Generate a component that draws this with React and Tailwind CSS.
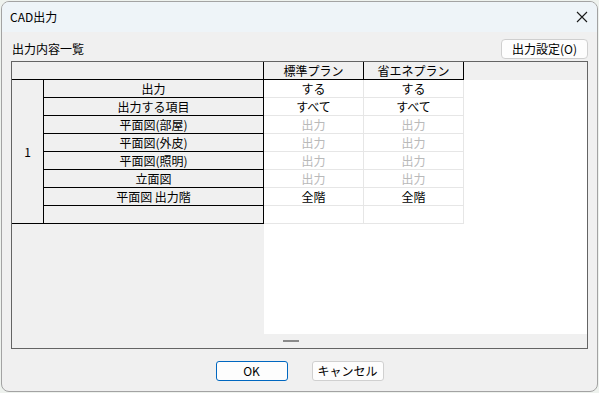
import React from "react";

const font = { fontFamily: '"Noto Sans CJK JP", "Noto Sans", sans-serif' };

const rows = [
  { label: "出力", a: "する", b: "する", dim: false },
  { label: "出力する項目", a: "すべて", b: "すべて", dim: false },
  { label: "平面図(部屋)", a: "出力", b: "出力", dim: true },
  { label: "平面図(外皮)", a: "出力", b: "出力", dim: true },
  { label: "平面図(照明)", a: "出力", b: "出力", dim: true },
  { label: "立面図", a: "出力", b: "出力", dim: true },
  { label: "平面図 出力階", a: "全階", b: "全階", dim: false },
  { label: "", a: "", b: "", dim: false },
];

export default function App() {
  return (
    <div className="w-[599px] h-[393px] bg-[#eef2ee] overflow-hidden text-[12px] text-black" style={font}>
      <div className="ml-[1px] mt-[1px] w-[597px] h-[391px] border border-[#a3a3a3] rounded-[8px] overflow-hidden flex flex-col bg-[#f0f0f0]">
        {/* title bar */}
        <div className="h-[30px] bg-[#eef4f8] flex items-center justify-between pl-[8px] pr-[8px] shrink-0">
          <span className="leading-none">CAD出力</span>
          <svg width="12" height="12" viewBox="0 0 12 12" className="mr-[1px]">
            <path d="M1 1 L11 11 M11 1 L1 11" stroke="#1a1a1a" strokeWidth="1.1" />
          </svg>
        </div>
        {/* body */}
        <div className="flex-1 flex flex-col px-[9px] pt-[7px]">
          <div className="h-[20px] flex items-center justify-between">
            <span className="leading-none ml-[1px]">出力内容一覧</span>
            <button className="h-[20px] w-[87px] bg-[#fdfdfd] border border-[#cfcfcf] rounded-[4px] flex items-center justify-center leading-none">
              出力設定(O)
            </button>
          </div>
          {/* table */}
          <div className="mt-[2px] h-[288px] border border-[#646464] flex flex-col">
            {/* header */}
            <div className="flex h-[18px] shrink-0 bg-[#f0f0f0]">
              <div className="w-[252px] border-r border-b border-black"></div>
              <div className="w-[100px] border-r border-b border-black flex items-center justify-center leading-none">標準プラン</div>
              <div className="w-[100px] border-r border-b border-black flex items-center justify-center leading-none">省エネプラン</div>
              <div className="flex-1"></div>
            </div>
            {/* body */}
            <div className="flex flex-1">
              <div className="w-[252px] bg-[#f0f0f0] flex items-start">
                <div className="w-[32px] h-[144px] border-r border-b border-black flex items-center justify-center leading-none">1</div>
                <div className="w-[220px] flex flex-col">
                  {rows.map((r, i) => (
                    <div key={i} className="h-[18px] border-r border-b border-black flex items-center justify-center leading-none">
                      {r.label}
                    </div>
                  ))}
                </div>
              </div>
              <div className="flex-1 bg-white flex items-start">
                <div className="flex flex-col w-[100px]">
                  {rows.map((r, i) => (
                    <div key={i} className={`h-[18px] border-r border-b border-[#e6e6e6] flex items-center justify-center leading-none ${r.dim ? "text-[#b9b9b9]" : "text-black"}`}>
                      {r.a}
                    </div>
                  ))}
                </div>
                <div className="flex flex-col w-[100px]">
                  {rows.map((r, i) => (
                    <div key={i} className={`h-[18px] border-r border-b border-[#e6e6e6] flex items-center justify-center leading-none ${r.dim ? "text-[#b9b9b9]" : "text-black"}`}>
                      {r.b}
                    </div>
                  ))}
                </div>
              </div>
            </div>
            {/* splitter */}
            <div className="h-[14px] shrink-0 bg-[#f0f0f0] flex items-center justify-center">
              <div className="w-[16px] h-[2px] bg-[#8a8a8a] mr-[18px]"></div>
            </div>
          </div>
          {/* buttons */}
          <div className="flex justify-center gap-[24px] mt-[12px]">
            <button className="w-[72px] h-[20px] bg-[#fdfdfd] border border-[#0067c0] rounded-[3px] flex items-center justify-center leading-none">OK</button>
            <button className="w-[72px] h-[20px] bg-[#fdfdfd] border border-[#d0d0d0] rounded-[3px] flex items-center justify-center leading-none">キャンセル</button>
          </div>
        </div>
      </div>
    </div>
  );
}
